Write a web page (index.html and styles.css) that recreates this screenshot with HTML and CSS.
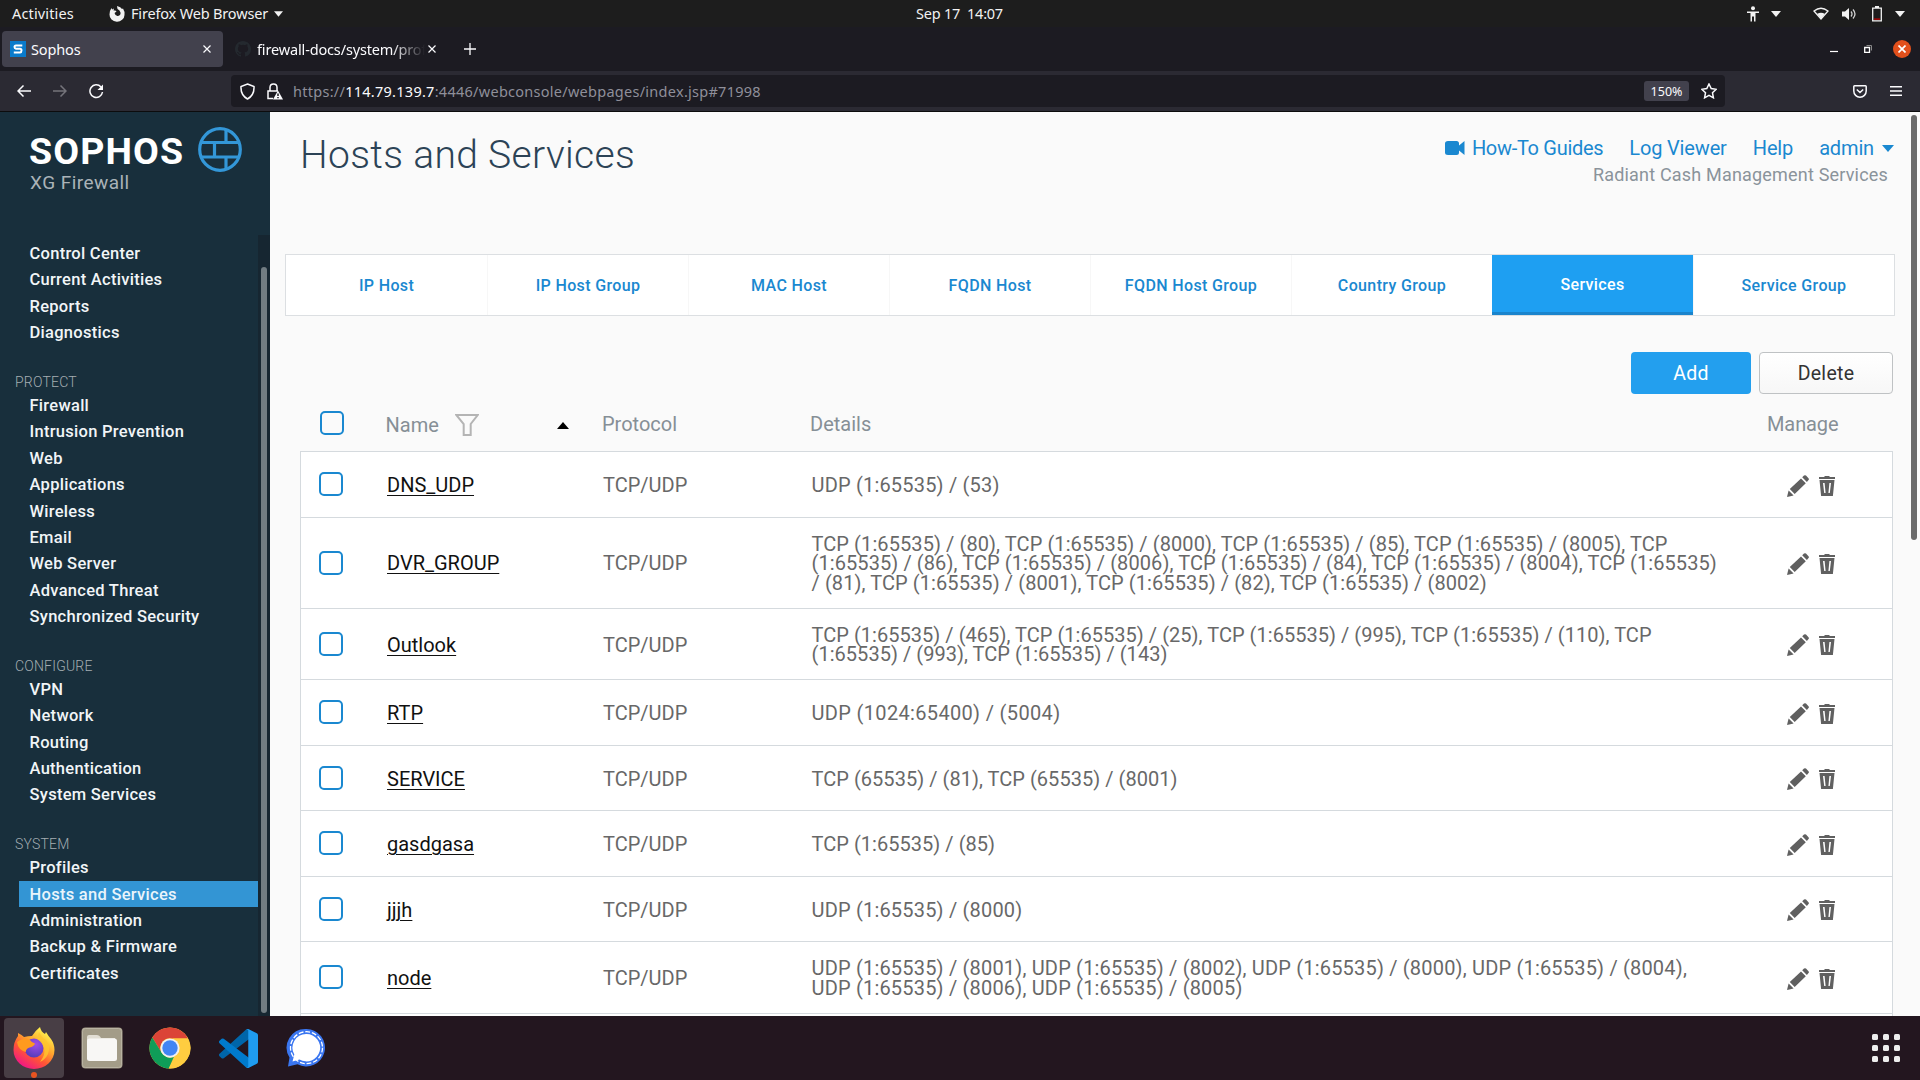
FILE: index.html
```html
<!DOCTYPE html>
<html lang="en">
<head>
<meta charset="utf-8">
<title>Sophos</title>
<link rel="stylesheet" href="styles.css">
</head>
<body>
<svg class="defs" width="0" height="0" aria-hidden="true">
  <symbol id="pencil" viewBox="0 0 22 22"><path d="M0 22l1.6-6.6 5 5zM2.8 14L14 3.4l4.8 4.8L7.7 19zM15.2 2.3L17 .6q1-.9 2 0l2.5 2.6q.8 1 0 1.9L19.900 6.900z"/></symbol>
  <symbol id="trash" viewBox="0 0 16 20"><path d="M5.500 0h5v1H16v2H0V1h5.500zM.5 4h15l-1.600 16H2.100zM4 7l1.200 10h1.400L5.600 7zm6.400 0l-1 10h1.400L12 7z" fill-rule="evenodd"/></symbol>
  <symbol id="caret" viewBox="0 0 10 6"><path d="M0 0h10L5 6z"/></symbol>
  <symbol id="cross" viewBox="0 0 8 8"><path d="M.5.5l7 7M7.500.5l-7 7" stroke="currentColor" stroke-width="1.200" fill="none"/></symbol>
</svg>

<header class="topbar">
  <span class="activities">Activities</span>
  <span class="app-menu">
    <svg width="16" height="17" viewBox="0 0 16 17"><path fill="#f2f2f2" d="M8 1q4 1 5 3l1-.5q2 3 1.500 6.500A7.500 7 0 0 1 .5 9.500Q.3 6 2.500 3l.6 1.500L5 3.500 4.500 5.500Q7 5 7.500 6.500L5.500 8q1 3.500 3.500 3 3-.8 2.500-3.500Q11 5 8.500 4z"/></svg>
    <span class="app-name">Firefox Web Browser</span>
    <svg width="9" height="6"><use href="#caret"/></svg>
  </span>
  <span class="clock">Sep 17&nbsp; 14:07</span>
  <span class="tray">
    <svg class="t-access" width="12" height="16" viewBox="0 0 12 16"><circle cx="6" cy="2.200" r="2"/><path d="M0 5.500h12V7H8.500v8.500H7V10.500H5v5H3.500V7H0z"/></svg>
    <svg class="t-caret" width="10" height="6"><use href="#caret"/></svg>
    <svg class="t-wifi" width="16" height="13" viewBox="0 0 16 13"><path d="M1 4Q8-1.500 15 4L8 12z" fill="none" stroke="#f2f2f2" stroke-width="1.300"/><path d="M4.200 6.800q3.800-2.200 7.600 0L8 12z"/></svg>
    <svg class="t-vol" width="15" height="14" viewBox="0 0 15 14"><path d="M0 4.500h3L7 1v12L3 9.500H0z"/><path d="M9 4.500q2 2.500 0 5M11 2.500q4 4.500 0 9" fill="none" stroke="#d0d0d0" stroke-width="1.300"/></svg>
    <svg class="t-bat" width="10" height="16" viewBox="0 0 10 16"><path d="M.7 2.200h8.600v12.600H.7z" fill="none" stroke="#f2f2f2" stroke-width="1.300"/><path d="M3 0h4v2H3z"/><path fill="#c00" d="M2 12.500h6v1.200H2z"/></svg>
    <svg width="10" height="6"><use href="#caret"/></svg>
  </span>
</header>

<div class="tabstrip">
  <div class="btab active">
    <svg width="16" height="16" viewBox="0 0 16 16"><path fill="#0a7bcb" d="M0 0h16v16H0z"/><path fill="none" stroke="#fff" stroke-width="2" d="M12.300 4.500H6Q4.500 4.500 4.500 6T6 7.700h4Q11.500 7.700 11.500 9.500T10 11.500H3.800"/></svg>
    <span class="btab-title sophos">Sophos</span>
    <svg class="x" width="8" height="8"><use href="#cross"/></svg>
  </div>
  <div class="btab second">
    <svg width="16" height="16" viewBox="0 0 16 16"><path fill="#24292f" d="M8 0C3.580 0 0 3.580 0 8c0 3.540 2.290 6.530 5.470 7.590.4.070.55-.17.55-.38v-1.490c-2.010.37-2.530-.49-2.690-.94-.09-.23-.48-.94-.82-1.130-.28-.15-.68-.52-.01-.53.63-.01 1.080.58 1.230.82.72 1.210 1.870.87 2.330.66.07-.52.28-.87.51-1.070-1.780-.2-3.640-.89-3.640-3.950 0-.87.31-1.590.82-2.150-.08-.2-.36-1.020.08-2.120 0 0 .67-.21 2.200.82a7.600 7.600 0 0 1 4 0c1.530-1.040 2.200-.82 2.200-.82.44 1.100.16 1.920.08 2.120.51.56.82 1.270.82 2.150 0 3.070-1.870 3.750-3.650 3.950.29.25.54.73.54 1.480v2.200c0 .21.15.46.55.38A8 8 0 0 0 16 8c0-4.420-3.580-8-8-8z"/></svg>
    <span class="btab-title docs">firewall-docs/system/prof</span>
    <svg class="x" width="8" height="8"><use href="#cross"/></svg>
  </div>
  <svg class="plus" width="12" height="12" viewBox="0 0 12 12"><path d="M6 0v12M0 6h12" stroke="#fbfbfe" stroke-width="1.300"/></svg>
  <div class="winbtns">
    <svg width="8" height="12" viewBox="0 0 8 12"><path stroke="#fff" stroke-width="1.200" d="M0 8.500h8"/></svg>
    <svg width="8" height="8" viewBox="0 0 8 8"><path fill="none" stroke="#fff" stroke-width="1.300" d="M.7 2.500h4.800v4.800H.7z"/><path fill="none" stroke="#888" d="M2.500.5h5v5"/></svg>
    <span class="wclose"><svg width="8" height="8" viewBox="0 0 8 8"><path d="M.5.5l7 7M7.500.5l-7 7" stroke="#fff" stroke-width="1.700"/></svg></span>
  </div>
</div>

<div class="toolbar">
  <svg class="nav" width="14" height="12" viewBox="0 0 14 12"><path d="M14 6H1M6.500.5L1 6l5.500 5.500"/></svg>
  <svg class="nav dim" width="14" height="12" viewBox="0 0 14 12"><path d="M0 6h13M7.500.5L13 6l-5.500 5.500"/></svg>
  <svg class="nav" width="15" height="15" viewBox="0 0 15 15"><path d="M12 3A6.300 6.300 0 1 0 13.500 8"/><path d="M14 .5v5.500H8.500z" fill="#fbfbfe" stroke="none"/></svg>
  <div class="urlbar">
    <svg class="nav shield" width="15" height="17" viewBox="0 0 15 17"><path d="M7.500 1L14 3.500Q14.500 12 7.500 16 .5 12 1 3.500z"/></svg>
    <svg class="nav lock" width="16" height="17" viewBox="0 0 16 17"><path d="M3 8V4.500q0-3.500 3.500-3.500T10 4.500V8M6 15.500H1V8h10"/><path d="M11 7.500l5 9H6z" fill="#fbfbfe" stroke="none"/><path d="M11 10.500v2.500M11 14v1.300" stroke="#1c1b22"/></svg>
    <span class="url">https://<b>114.79.139.7</b>:4446/webconsole/webpages/index.jsp#71998</span>
    <span class="zoom">150%</span>
    <svg class="nav star" width="16" height="16" viewBox="0 0 16 16"><path d="M8 1l2.200 4.600 5 .7-3.700 3.500.9 5L8 12.400l-4.400 2.400.9-5L.8 6.300l5-.7z"/></svg>
  </div>
  <svg class="nav pocket" width="14" height="13" viewBox="0 0 14 13"><path d="M1.500.8h11q.7 0 .7.800V6a6.200 6.200 0 0 1-12.400 0V1.600q0-.8.700-.8zM3.800 4.500L7 7.500l3.200-3"/></svg>
  <svg class="nav burger" width="12" height="10" viewBox="0 0 12 10"><path d="M0 .7h12M0 5h12M0 9.300h12"/></svg>
</div>

<div class="content">
  <aside class="sidebar">
    <div class="brand">
      <div>
        <div class="logo">SOPHOS</div>
        <div class="product">XG Firewall</div>
      </div>
      <svg class="globe" width="44" height="45" viewBox="0 0 44 45"><g fill="none" stroke="#3397d8" stroke-width="3.200"><ellipse cx="22" cy="22.500" rx="20.300" ry="20.800"/><path d="M4 15.500h36M4 30h36M28 2v13.500M16.500 15.500V30M28 30v13"/></g></svg>
    </div>
    <nav class="menu">
      <ul>
        <li>Control Center</li><li>Current Activities</li><li>Reports</li><li>Diagnostics</li>
      </ul>
      <h2>PROTECT</h2>
      <ul>
        <li>Firewall</li><li>Intrusion Prevention</li><li>Web</li><li>Applications</li><li>Wireless</li><li>Email</li><li>Web Server</li><li>Advanced Threat</li><li>Synchronized Security</li>
      </ul>
      <h2>CONFIGURE</h2>
      <ul>
        <li>VPN</li><li>Network</li><li>Routing</li><li>Authentication</li><li>System Services</li>
      </ul>
      <h2>SYSTEM</h2>
      <ul>
        <li>Profiles</li><li class="current">Hosts and Services</li><li>Administration</li><li>Backup &amp; Firmware</li><li>Certificates</li>
      </ul>
      <div class="side-scroll"><div class="side-thumb"></div></div>
    </nav>
  </aside>

  <main class="main">
    <div class="page-head">
      <h1>Hosts and Services</h1>
      <div class="account">
        <div class="links">
          <a class="howto"><svg width="20" height="14" viewBox="0 0 20 14"><path d="M3 0h8.500q2.500 0 2.500 2.500v2L19.500 0v14L14 9.500v2Q14 14 11.500 14H3Q0 14 0 11.500v-9Q0 0 3 0z"/></svg><span>How-To Guides</span></a>
          <a class="log">Log Viewer</a>
          <a class="help">Help</a>
          <a class="admin">admin<svg width="12" height="7" viewBox="0 0 10 6" preserveAspectRatio="none"><path d="M0 0h10L5 6z"/></svg></a>
        </div>
        <div class="company">Radiant Cash Management Services</div>
      </div>
    </div>

    <div class="tabs">
      <a>IP Host</a><a>IP Host Group</a><a>MAC Host</a><a>FQDN Host</a><a>FQDN Host Group</a><a>Country Group</a><a class="on">Services</a><a>Service Group</a>
    </div>

    <div class="actions"><button class="add">Add</button><button class="del">Delete</button></div>

    <div class="grid-head">
      <span class="box"></span>
      <span class="h-name">Name
        <svg width="24" height="22" viewBox="0 0 24 22"><path d="M1.300 1h21.400l-7 9v11H8.700V10z" fill="none" stroke="#b4b4b4" stroke-width="2"/></svg>
      </span>
      <svg class="sort" width="12" height="7" viewBox="0 0 12 7"><path d="M0 7h12L6 0z"/></svg>
      <span class="h-proto">Protocol</span>
      <span class="h-det">Details</span>
      <span class="h-man">Manage</span>
    </div>

    <div class="rows">
      <div class="row r66"><span class="box"></span><a class="name">DNS_UDP</a><span class="proto">TCP/UDP</span><span class="det udp">UDP (1:65535) / (53)</span><span class="ops"><svg width="22" height="22"><use href="#pencil"/></svg><svg width="16" height="20"><use href="#trash"/></svg></span></div>
      <div class="row r91"><span class="box"></span><a class="name">DVR_GROUP</a><span class="proto">TCP/UDP</span><span class="det">TCP (1:65535) / (80), TCP (1:65535) / (8000), TCP (1:65535) / (85), TCP (1:65535) / (8005), TCP<br>(1:65535) / (86), TCP (1:65535) / (8006), TCP (1:65535) / (84), TCP (1:65535) / (8004), TCP (1:65535)<br>/ (81), TCP (1:65535) / (8001), TCP (1:65535) / (82), TCP (1:65535) / (8002)</span><span class="ops"><svg width="22" height="22"><use href="#pencil"/></svg><svg width="16" height="20"><use href="#trash"/></svg></span></div>
      <div class="row r71"><span class="box"></span><a class="name low">Outlook</a><span class="proto low">TCP/UDP</span><span class="det tight">TCP (1:65535) / (465), TCP (1:65535) / (25), TCP (1:65535) / (995), TCP (1:65535) / (110), TCP<br>(1:65535) / (993), TCP (1:65535) / (143)</span><span class="ops"><svg width="22" height="22"><use href="#pencil"/></svg><svg width="16" height="20"><use href="#trash"/></svg></span></div>
      <div class="row r66"><span class="box"></span><a class="name">RTP</a><span class="proto">TCP/UDP</span><span class="det wide">UDP (1024:65400) / (5004)</span><span class="ops"><svg width="22" height="22"><use href="#pencil"/></svg><svg width="16" height="20"><use href="#trash"/></svg></span></div>
      <div class="row r65"><span class="box"></span><a class="name low">SERVICE</a><span class="proto low">TCP/UDP</span><span class="det tight low">TCP (65535) / (81), TCP (65535) / (8001)</span><span class="ops"><svg width="22" height="22"><use href="#pencil"/></svg><svg width="16" height="20"><use href="#trash"/></svg></span></div>
      <div class="row r66"><span class="box"></span><a class="name">gasdgasa</a><span class="proto">TCP/UDP</span><span class="det tight">TCP (1:65535) / (85)</span><span class="ops"><svg width="22" height="22"><use href="#pencil"/></svg><svg width="16" height="20"><use href="#trash"/></svg></span></div>
      <div class="row r65"><span class="box"></span><a class="name low">jjjh</a><span class="proto low">TCP/UDP</span><span class="det udp low">UDP (1:65535) / (8000)</span><span class="ops"><svg width="22" height="22"><use href="#pencil"/></svg><svg width="16" height="20"><use href="#trash"/></svg></span></div>
      <div class="row r72"><span class="box"></span><a class="name">node</a><span class="proto">TCP/UDP</span><span class="det udp">UDP (1:65535) / (8001), UDP (1:65535) / (8002), UDP (1:65535) / (8000), UDP (1:65535) / (8004),<br>UDP (1:65535) / (8006), UDP (1:65535) / (8005)</span><span class="ops"><svg width="22" height="22"><use href="#pencil"/></svg><svg width="16" height="20"><use href="#trash"/></svg></span></div>
    </div>
    <div class="page-thumb"></div>
  </main>
</div>

<footer class="dock">
  <div class="tile running">
    <svg width="44" height="44" viewBox="0 0 44 44">
      <defs>
        <linearGradient id="ff" x1=".8" y1=".1" x2=".25" y2=".95"><stop offset="0" stop-color="#fff44f"/><stop offset=".35" stop-color="#ffa92e"/><stop offset=".65" stop-color="#ff5634"/><stop offset="1" stop-color="#f01883"/></linearGradient>
        <radialGradient id="ffg" cx=".6" cy=".3" r=".8"><stop offset="0" stop-color="#a04ce8"/><stop offset="1" stop-color="#4b3bb5"/></radialGradient>
      </defs>
      <path fill="url(#ff)" d="M28 1q1 5 5 7l1-2q3 5 5 7 3.500 5 3.500 11A20.500 19 0 0 1 1.500 24Q1.500 16 6 10l0-3q4 2 6 4 4-1 8-1 4-6 8-9z"/>
      <circle cx="22" cy="22" r="9.500" fill="url(#ffg)"/>
      <path fill="#ff9a1f" d="M5 16q8-6 13-2 2 3 5 3.500-1 3-5.500 4-4 1.500-3.500 4.500-8-2-9-10z"/>
      <path fill="#ffc52e" opacity=".8" d="M27 6q2 5 7 8 5 6 2 14-3 6-8 8 6-8 4-14-2-6-7-9z"/>
    </svg>
    <i class="dot"></i>
  </div>
  <div class="tile"><svg width="42" height="42" viewBox="0 0 42 42"><rect x=".5" y=".5" width="41" height="41" rx="4" fill="#a39c88"/><rect x="1.500" y="1.500" width="39" height="39" rx="3" fill="none" stroke="#b9b3a2"/><path fill="#e2ded4" d="M6 10q0-2 2-2h8q2 0 3 1.500l1 1.500h14v6H6z"/><rect x="6" y="11.500" width="30" height="22.500" rx="2.500" fill="#f8f7f5"/></svg></div>
  <div class="tile"><svg width="42" height="42" viewBox="0 0 48 48"><circle cx="24" cy="24" r="23.500" fill="#ffcd40"/><path fill="#db4437" d="M24 .5A23.500 23.500 0 0 1 44.500 13H24a11 11 0 0 0-9.600 16.500L3.800 12A23.500 23.500 0 0 1 24 .5z"/><path fill="#0f9d58" d="M3.800 12l10.700 17.500A11 11 0 0 0 28.500 34L22.500 47.450A23.500 23.500 0 0 1 3.800 12z"/><path fill="#ffcd40" d="M44.500 13H24a11 11 0 0 1 9.500 16.500L22.500 47.450A23.500 23.500 0 0 0 44.500 13z"/><circle cx="24" cy="24" r="11" fill="#f1f1f1"/><circle cx="24" cy="24" r="8.800" fill="#4285f4"/></svg></div>
  <div class="tile"><svg width="39" height="39" viewBox="0 0 100 100"><path fill="#0065a9" d="M96.500 10.800L75.900.9a6.200 6.200 0 0 0-7.100 1.200L1.300 63.600a4.200 4.200 0 0 0 0 6.100l5.500 5a4.200 4.200 0 0 0 5.300.3L93.400 13.400a4.100 4.100 0 0 1 6.600 3.300v-.2a6.300 6.300 0 0 0-3.500-5.700z"/><path fill="#007acc" d="M96.500 89.200l-20.600 9.900a6.200 6.200 0 0 1-7.100-1.200L1.300 36.400a4.200 4.200 0 0 1 0-6.100l5.500-5a4.200 4.200 0 0 1 5.300-.3l81.300 61.600a4.100 4.100 0 0 0 6.600-3.300v.2a6.300 6.300 0 0 1-3.500 5.700z"/><path fill="#1f9cf0" d="M75.900 99.100a6.200 6.200 0 0 1-7.100-1.200c2.300 2.300 6.200.7 6.200-2.600V4.700c0-3.300-3.900-4.900-6.200-2.600a6.200 6.200 0 0 1 7.100-1.200l20.600 9.900a6.300 6.300 0 0 1 3.500 5.700v67a6.300 6.300 0 0 1-3.500 5.700z"/></svg></div>
  <div class="tile"><svg width="40" height="40" viewBox="0 0 40 40"><path fill="#3a76f0" d="M20.500 1a18.700 18.700 0 1 1-9 35.200L2 38.500l1.500-9A18.700 18.700 0 0 1 20.500 1z"/><circle cx="20.500" cy="19.700" r="16" fill="none" stroke="#fff" stroke-width="1.300" stroke-dasharray="4.800 1.900"/><path fill="#fff" d="M20.500 6a13.700 13.700 0 1 1-7 25.500L6.500 33.500l1.800-7A13.700 13.700 0 0 1 20.500 6z"/></svg></div>
  <svg class="apps" width="28" height="28" viewBox="0 0 28 28"><g fill="#eee"><rect width="6" height="6" rx="1.500"/><rect x="11" width="6" height="6" rx="1.500"/><rect x="22" width="6" height="6" rx="1.500"/><rect y="11" width="6" height="6" rx="1.500"/><rect x="11" y="11" width="6" height="6" rx="1.500"/><rect x="22" y="11" width="6" height="6" rx="1.500"/><rect y="22" width="6" height="6" rx="1.500"/><rect x="11" y="22" width="6" height="6" rx="1.500"/><rect x="22" y="22" width="6" height="6" rx="1.500"/></g></svg>
</footer>
</body>
</html>
```
FILE: styles.css
```css
* { box-sizing: border-box; }
body { margin: 0; width: 1920px; height: 1080px; overflow: hidden; display: flex; flex-direction: column; font-family: Roboto, "Liberation Sans", sans-serif; background: #fafafa; }
svg { display: block; flex: none; }
.defs { position: absolute; }
ul, h1, h2 { margin: 0; padding: 0; list-style: none; font-weight: 400; }

/* desktop top bar */
.topbar { height: 27px; background: #1d1d1d; color: #f2f2f2; font: 14.500px/20px "Noto Sans", sans-serif; display: grid; grid-template-columns: 1fr auto 1fr; align-items: center; padding: 0 15px 0 12px; fill: #f2f2f2; grid-template-areas: "l c r"; white-space: nowrap; }
.activities, .app-name, .clock { padding-bottom: 2px; }
.activities { grid-area: l; letter-spacing: .15px; }
.app-menu { grid-area: l; display: flex; align-items: center; gap: 6px; margin-left: 97px; letter-spacing: -.17px; }
.clock { grid-area: c; letter-spacing: -.25px; padding-left: 2px; }
.tray { grid-area: r; display: flex; justify-content: flex-end; align-items: center; }
.t-access { margin-right: 12px; }
.t-caret { margin-right: 32px; }
.t-wifi { margin-right: 13px; }
.t-vol { margin-right: 15px; }
.t-bat { margin-right: 13px; }

/* browser tab strip */
.tabstrip { height: 44px; background: #1c1b22; display: flex; align-items: center; padding: 0 9px 0 2px; color: #fbfbfe; font: 14.500px "Noto Sans", sans-serif; }
.btab { height: 36px; display: flex; align-items: center; border-radius: 4px; width: 221px; padding: 0 12px 0 8px; margin-right: 4px; }
.btab.active { background: #42414d; }
.btab-title { margin-left: 5px; flex: 1; white-space: nowrap; overflow: hidden; letter-spacing: -.15px; }
.docs { margin-left: 6px; -webkit-mask-image: linear-gradient(90deg, #000 80%, transparent); mask-image: linear-gradient(90deg, #000 80%, transparent); }
.second .x { margin-left: 3px; }
.plus { margin-left: 12px; }
.winbtns { margin-left: auto; display: flex; align-items: center; gap: 26px; }
.wclose { width: 18px; height: 18px; border-radius: 50%; background: #e2501c; display: grid; place-items: center; margin-left: -5px; }

/* browser navigation bar */
.toolbar { height: 41px; background: #2b2a33; border-bottom: 1px solid #0c0c0d; display: flex; align-items: center; padding: 0 18px 0 17px; gap: 22px; }
.nav { fill: none; stroke: #fbfbfe; stroke-width: 1.500; }
.dim { stroke: #75747b; }
.urlbar { width: 1494px; height: 32px; border-radius: 4px; background: #1c1b22; display: flex; align-items: center; margin-left: 105px; padding: 0 8px; }
.shield { margin-left: 1px; }
.lock { margin-left: 12px; }
.url { margin-left: 10px; font: 14.500px "Noto Sans", sans-serif; letter-spacing: .27px; color: #8f8f9a; flex: 1; }
.url b { color: #fbfbfe; font-weight: 400; }
.zoom { width: 45px; height: 20px; border-radius: 3px; background: #42414d; color: #fbfbfe; font: 12.500px/21px "Noto Sans", sans-serif; text-align: center; margin-right: 12px; }
.pocket { margin-left: 106px; }
.burger { margin-left: 1px; }

/* web console */
.content { height: 904px; display: flex; overflow: hidden; }
.sidebar { width: 270px; background: #182f3c; display: flex; flex-direction: column; }
.brand { height: 123px; display: flex; justify-content: space-between; padding: 15px 28px 0 29px; }
.logo { color: #fff; font: 700 37.500px/37px Roboto, sans-serif; letter-spacing: 1.100px; margin-top: 6px; height: 37px; white-space: nowrap; width: 160px; }
.product { color: #aab3b8; font-size: 19px; letter-spacing: .45px; line-height: 24px; margin-top: 1px; padding-left: 1px; }
.menu { position: relative; flex: 1; padding-top: 5px; }
.menu li { height: 26.400px; line-height: 28.400px; margin: 0 12px 0 19px; padding-left: 10.500px; color: #f1f5f7; font-weight: 500; font-size: 16.500px; letter-spacing: .28px; }
.menu li.current { background: #3395d4; color: #e9f4fb; }
.menu h2 { margin-top: 26.400px; height: 20px; line-height: 20px; padding-left: 15px; font-size: 14px; font-weight: 300; letter-spacing: .2px; color: #a4adb2; }
.side-scroll { position: absolute; top: 0; right: 0; width: 12px; bottom: 0; background: #162631; }
.side-thumb { margin: 32px 3px 0; height: 746px; border-radius: 3px; background: #717c82; }

.main { position: relative; flex: 1; background: #fafafa; padding: 0 26px 0 15px; }
.page-head { height: 142px; display: flex; justify-content: space-between; }
h1 { font-size: 39px; line-height: 46px; font-weight: 300; letter-spacing: .35px; color: #2c4356; margin: 20px 0 0 15px; }
.account { padding-top: 23px; text-align: right; }
.links { display: flex; justify-content: flex-end; height: 26px; color: #1a88d0; fill: #1a88d0; font-size: 20px; line-height: 26px; gap: 26px; letter-spacing: -.15px; }
.howto, .admin { display: flex; align-items: center; gap: 8px; }
.howto { letter-spacing: -.3px; gap: 7px; }
.company { color: #8a939a; font-size: 18px; line-height: 28px; letter-spacing: .19px; padding-right: 6px; }
.tabs { height: 62px; margin-right: -1px; border: 1px solid #dcdfe2; background: #fff; display: grid; grid-template-columns: repeat(8, 1fr); }
.tabs a { display: flex; align-items: center; justify-content: center; color: #1a88d0; font-weight: 500; font-size: 16px; letter-spacing: .36px; border-left: 1px solid #f7f7f7; }
.tabs a:first-child { border-left: 0; }
.tabs .on { background: #1e9ff2; color: #fff; border-bottom: 3px solid #1a84cc; border-left: 0; padding-top: 2px; }
.actions { margin-top: 36px; height: 42px; display: flex; justify-content: flex-end; gap: 8px; padding-right: 1px; }
button { font: 19.500px Roboto, sans-serif; border-radius: 4px; border: 0; padding: 0; }
.add { width: 120px; background: #239fee; color: #fff; letter-spacing: .2px; }
.del { width: 134px; background: linear-gradient(#fff, #f7f7f7); border: 1px solid #bfc2c4; color: #333; letter-spacing: .3px; }
.box { width: 24px; height: 24px; border: 2px solid #1a88d0; border-radius: 5px; background: #fff; }
.grid-head { height: 57px; display: grid; grid-template-columns: 24px 41.500px 171.500px 45px 208px 957px auto; align-items: center; padding-left: 35px; color: #868f96; font-size: 20px; grid-template-areas: "b . n s p d m"; }
.grid-head .box { grid-area: b; background: transparent; margin-top: 1px; }
.h-name { grid-area: n; display: flex; gap: 16px; align-items: center; padding-top: 4px; }
.h-name svg { margin-top: 1px; }
.sort { grid-area: s; margin-top: 5px; }
.h-proto { grid-area: p; padding-top: 2px; }
.h-det { grid-area: d; padding-top: 2px; }
.h-man { grid-area: m; padding-top: 2px; letter-spacing: -.1px; }
.rows { margin: 0 1px 0 15px; border: 1px solid #d5dade; border-bottom: 0; background: #fff; height: 640px; }
.row { display: grid; grid-template-columns: 24px 44px 216px 208.500px 975.500px auto; grid-template-areas: "b . n p d o"; align-items: center; padding-left: 18px; border-bottom: 1px solid #d5dade; font-size: 20px; line-height: 19.500px; color: #686868; }
.row .box { grid-area: b; margin-top: -1px; }
.name { grid-area: n; color: #111; text-decoration: underline; text-underline-offset: 3px; text-decoration-thickness: 1px; padding-top: 2px; }
.proto { grid-area: p; padding-top: 2px; }
.det { grid-area: d; white-space: nowrap; letter-spacing: .09px; padding-top: 2px; }
.row .low { padding-top: 3px; }
.udp { letter-spacing: .19px; }
.wide { letter-spacing: .34px; }
.tight { letter-spacing: .04px; }
.ops { grid-area: o; display: flex; gap: 10px; align-items: center; fill: #606060; padding-top: 2px; }
.r65 { height: 65px; } .r66 { height: 66px; } .r71 { height: 71px; } .r72 { height: 72px; } .r91 { height: 91px; }
.page-thumb { position: absolute; right: 3px; top: 3px; width: 6px; height: 425px; border-radius: 3px; background: #6b6b6b; }

/* dock */
.dock { height: 64px; background: #23161f; display: flex; align-items: center; padding: 0 20px 0 4px; gap: 8px; }
.tile { position: relative; width: 60px; height: 60px; border-radius: 4px; display: grid; place-items: center; }
.running { background: #483e45; }
.dot { position: absolute; left: 27px; bottom: 0; width: 6px; height: 6px; border-radius: 50%; background: #e95420; }
.apps { margin-left: auto; }
```
